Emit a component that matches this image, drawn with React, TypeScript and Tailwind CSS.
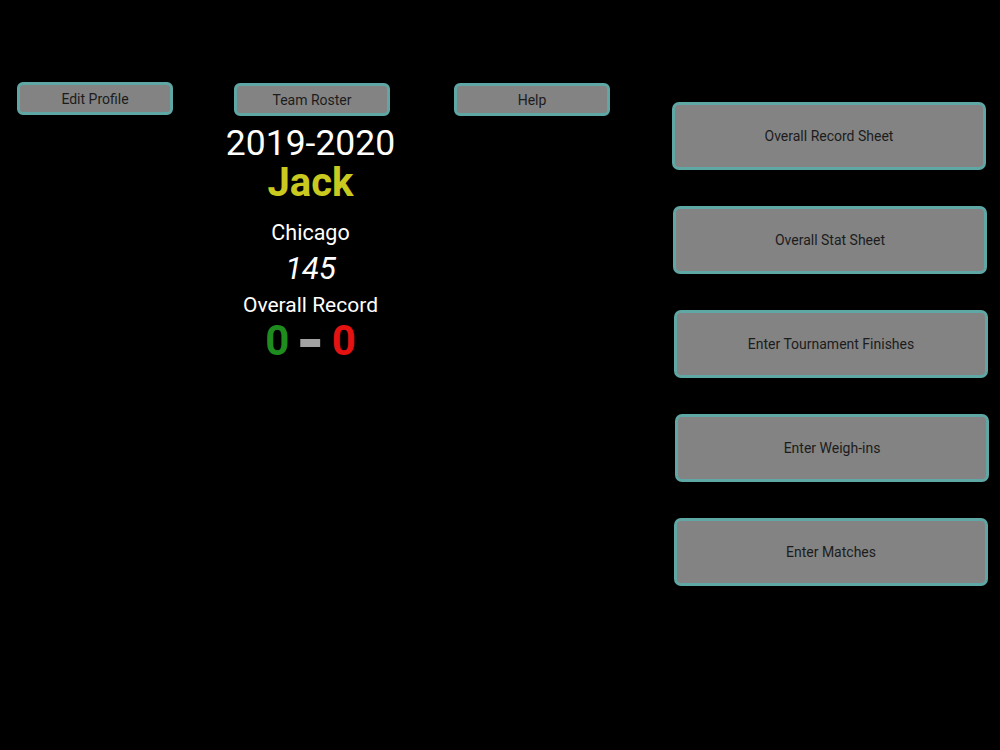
import React from "react";

const smallBtn =
  "flex h-[33px] w-[156px] items-center justify-center rounded-[6px] border-[3px] border-[#5fa7a4] bg-[#838383] text-[14px] leading-none text-[#1c1c1c]";
const bigBtn =
  "flex h-[68px] w-[314px] items-center justify-center rounded-[7px] border-[3px] border-[#5fa7a4] bg-[#838383] text-[14px] leading-none text-[#1c1c1c]";

export default function App() {
  const bigs: { label: string; cls: string }[] = [
    { label: "Overall Record Sheet", cls: "ml-0" },
    { label: "Overall Stat Sheet", cls: "ml-[1px]" },
    { label: "Enter Tournament Finishes", cls: "ml-[2px]" },
    { label: "Enter Weigh-ins", cls: "ml-[3px]" },
    { label: "Enter Matches", cls: "ml-[2px]" },
  ];
  return (
    <div
      className="flex h-[750px] w-[1000px] items-start bg-black pl-[17px] pt-[82px]"
      style={{ fontFamily: "Roboto, 'Noto Sans', sans-serif" }}
    >
      <div className={smallBtn}>Edit Profile</div>

      <div className="ml-[61px] mt-[1px] flex w-[156px] flex-col items-center">
        <div className={smallBtn}>Team Roster</div>
        <div className="flex flex-col items-center pr-[3px]">
          <div className="mt-[10px] h-[35px] whitespace-nowrap text-[35.5px] leading-[35px] text-white">
            2019-2020
          </div>
          <div className="mt-[2px] h-[40px] whitespace-nowrap text-[40px] font-bold leading-[40px] text-[#c9c91f]">
            Jack
          </div>
          <div className="mt-[19px] h-[22px] whitespace-nowrap text-[21.5px] leading-[22px] text-white">
            Chicago
          </div>
          <div className="mt-[9px] h-[32px] whitespace-nowrap text-[31px] italic leading-[32px] text-white">
            145
          </div>
          <div className="mt-[9px] h-[22px] whitespace-nowrap text-[21px] leading-[22px] text-white">
            Overall Record
          </div>
          <div className="mt-[2px] flex h-[46px] items-center whitespace-nowrap font-bold">
            <span className="text-[42px] leading-[46px] text-[#1f8c1f]">0</span>
            <span className="mx-[7px] text-[72px] leading-none text-[#a3a3a3]">-</span>
            <span className="text-[42px] leading-[46px] text-[#e51212]">0</span>
          </div>
        </div>
      </div>

      <div className={`${smallBtn} ml-[64px] mt-[1px]`}>Help</div>

      <div className="ml-[62px] mt-[20px] flex flex-col gap-[36px]">
        {bigs.map((b) => (
          <div key={b.label} className={`${bigBtn} ${b.cls}`}>
            {b.label}
          </div>
        ))}
      </div>
    </div>
  );
}
